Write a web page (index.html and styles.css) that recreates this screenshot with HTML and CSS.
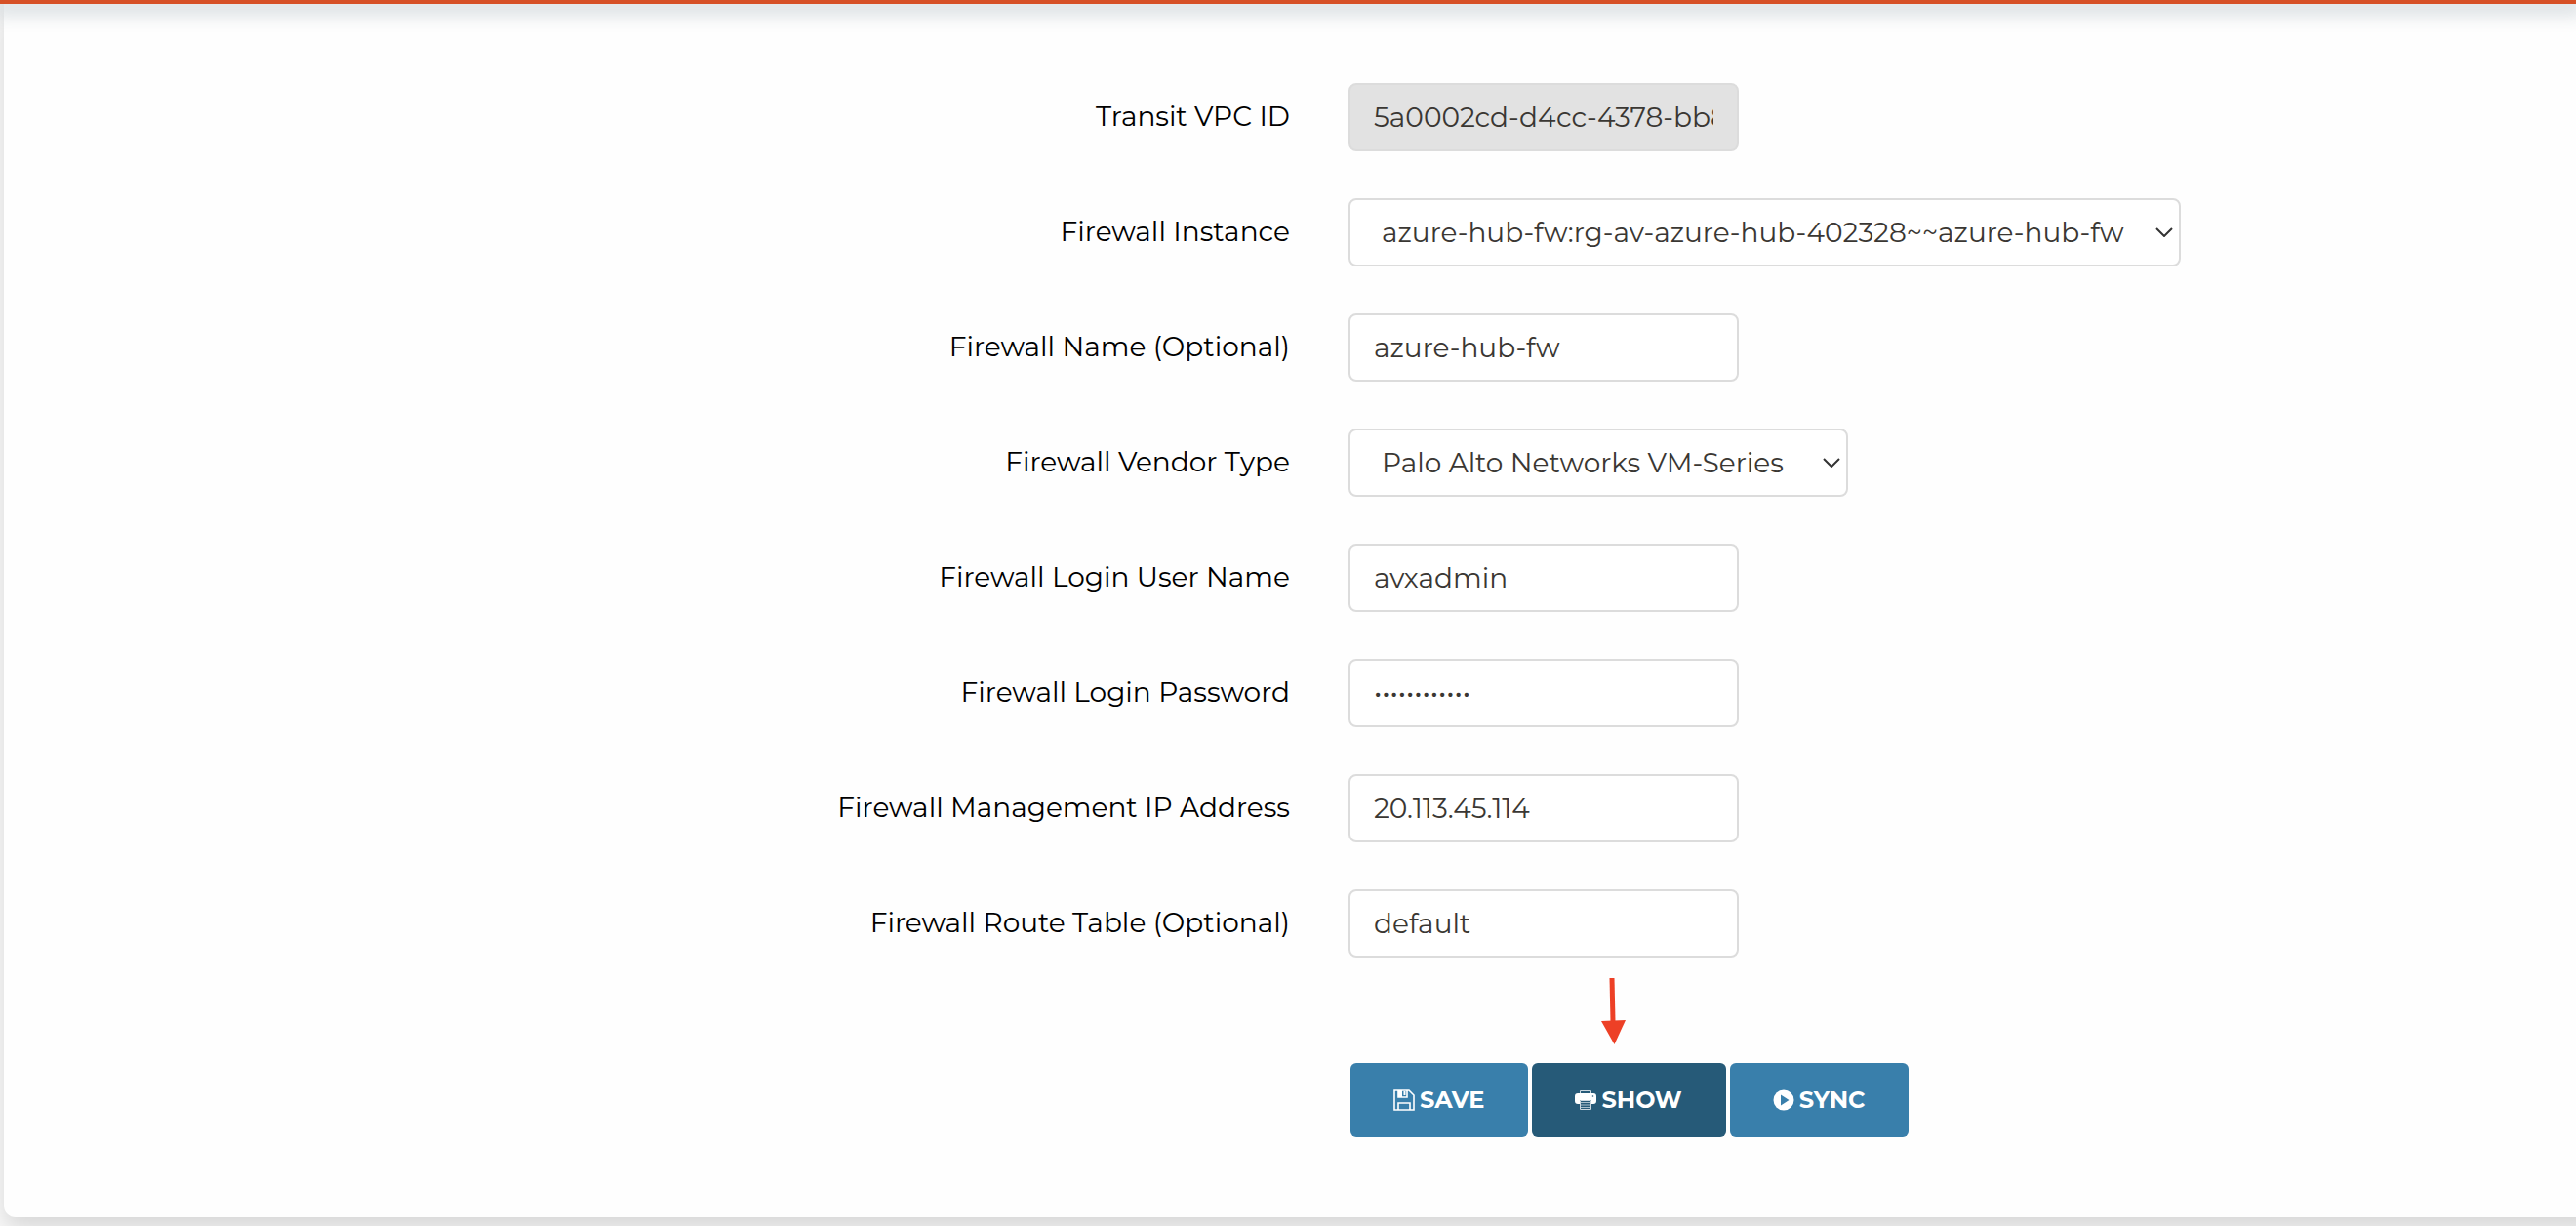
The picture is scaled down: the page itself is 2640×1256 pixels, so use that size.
FILE: index.html
```html
<!DOCTYPE html>
<html lang="en">
<head>
<meta charset="utf-8">
<title>Firewall Vendor Integration</title>
<link rel="stylesheet" href="styles.css">
</head>
<body>
<header class="topbar"></header>
<main class="card">
  <form class="form">
    <div class="row">
      <label class="label" for="vpc">Transit VPC ID</label>
      <div><input class="field" id="vpc" type="text" value="5a0002cd-d4cc-4378-bb8e" disabled></div>
    </div>
    <div class="row">
      <label class="label" for="instance">Firewall Instance</label>
      <div><select class="field select select-wide" id="instance"><option>azure-hub-fw:rg-av-azure-hub-402328~~azure-hub-fw</option></select></div>
    </div>
    <div class="row">
      <label class="label" for="name">Firewall Name (Optional)</label>
      <div><input class="field" id="name" type="text" value="azure-hub-fw"></div>
    </div>
    <div class="row">
      <label class="label" for="vendor">Firewall Vendor Type</label>
      <div><select class="field select select-medium" id="vendor"><option>Palo Alto Networks VM-Series</option></select></div>
    </div>
    <div class="row">
      <label class="label" for="user">Firewall Login User Name</label>
      <div><input class="field" id="user" type="text" value="avxadmin"></div>
    </div>
    <div class="row">
      <label class="label" for="password">Firewall Login Password</label>
      <div><input class="field" id="password" type="password" value="aaaaaaaaaaaa"></div>
    </div>
    <div class="row">
      <label class="label" for="ip">Firewall Management IP Address</label>
      <div><input class="field" id="ip" type="text" value="20.113.45.114"></div>
    </div>
    <div class="row">
      <label class="label" for="route">Firewall Route Table (Optional)</label>
      <div><input class="field" id="route" type="text" value="default"></div>
    </div>
    <div class="row actions-row">
      <div class="actions">
        <button class="button" type="button">
          <svg class="icon" viewBox="0 0 22 22" fill="none" stroke="#fff" stroke-width="1.6"><path d="M1 1h15l5 5v15H1z"/><path d="M5 21v-7h12v7M5 1v7h9V1"/><path d="M5 1h4v7H5zM10.500 2h2v4h-2z" fill="#fff" stroke="none"/></svg>
          SAVE
        </button>
        <button class="button button-active" type="button">
          <svg class="icon" viewBox="0 0 22 22"><path d="M5.500 5V1.500h11V5" fill="none" stroke="#cbd8e0"/><path d="M3 4h16a3 3 0 0 1 3 3v5a3 3 0 0 1-3 3h-2v-4H5v4H3a3 3 0 0 1-3-3V7a3 3 0 0 1 3-3z" fill="#fff"/><circle cx="18.500" cy="7" r=".8" fill="#265a78"/><path d="M5.500 11.500h11v9h-11z" fill="#265a78" stroke="#cbd8e0"/><path d="M6 13.500h10M6 16h10M6 18.500h10" stroke="#a9bfcc" stroke-width="1.200"/></svg>
          SHOW
          <svg class="arrow" viewBox="0 0 26 68" fill="#ed4026"><path d="M8.500 0h5l1 44h-5z"/><path d="M0 44l25-1-11.500 25z"/></svg>
        </button>
        <button class="button" type="button">
          <svg class="icon" viewBox="0 0 22 22"><circle cx="11" cy="11" r="10.500" fill="#fff"/><path d="M8 5.500v11L16.500 11z" fill="#397fab"/></svg>
          SYNC
        </button>
      </div>
    </div>
  </form>
</main>
</body>
</html>
```
FILE: styles.css
```css
* { box-sizing: border-box; }

body {
  margin: 0;
  background: #fafafa;
  font-family: Montserrat, Inter, sans-serif;
  font-size: 28px;
  color: #000;
  overflow-x: hidden;
}

.topbar {
  position: relative;
  z-index: 1;
  height: 4px;
  background: #d65026;
  box-shadow: 0 4px 18px 8px rgba(40, 70, 90, 0.16);
}

.card {
  margin: 0 -32px 9px 4px;
  padding: 81px 32px 82px 0;
  background: #fefefe;
  border-radius: 0 0 0 12px;
  box-shadow: 0 12px 24px rgba(0, 0, 0, 0.14);
}

.form {
  display: flex;
  flex-direction: column;
  gap: 48px;
}

.row {
  display: grid;
  grid-template-columns: 1fr 1fr;
  align-items: center;
}

.label {
  text-align: right;
  line-height: 36px;
  padding-bottom: 2px;
}

.row > div { padding-left: 60px; }

.field {
  display: block;
  width: 400px;
  height: 70px;
  padding: 0 24px;
  border: 2px solid #dcdcdc;
  border-radius: 8px;
  background: #fff;
  color: #3a3733;
  font: inherit;
}

.field:disabled { background: #e2e2e2; }

.select {
  appearance: none;
  padding: 0 56px 0 32px;
  background: #fff url("data:image/svg+xml,%3Csvg xmlns='http://www.w3.org/2000/svg' width='18' height='10' fill='none' stroke='%23333' stroke-width='2'%3E%3Cpath d='M1 1l8 8 8-8'/%3E%3C/svg%3E") no-repeat right 6px center;
}

.select-wide { width: 853px; }
.select-medium { width: 512px; }

.actions-row { padding-top: 60px; }

.row > .actions {
  grid-column: 2;
  display: flex;
  gap: 4px;
  padding-left: 62px;
}

.button {
  position: relative;
  display: flex;
  align-items: center;
  justify-content: center;
  gap: 5px;
  height: 76px;
  padding: 0 45px 1px 44px;
  border: 0;
  border-radius: 6px;
  background: #397fab;
  color: #fff;
  font: inherit;
  font-size: 24px;
  font-weight: 700;
}

.button-active { background: #265a78; }

.icon {
  width: 22px;
  height: 22px;
}

/* Callout pointing at the Show button */
.arrow {
  position: absolute;
  left: 71px;
  bottom: 95px;
  width: 26px;
  height: 68px;
}
```
